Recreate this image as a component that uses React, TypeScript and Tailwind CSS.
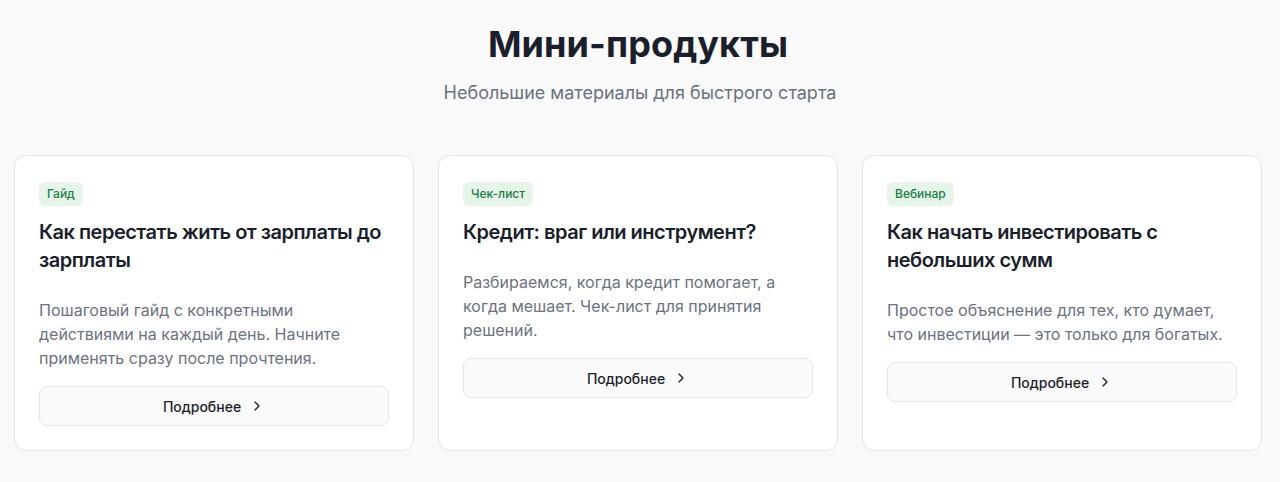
import React from "react";
import { ChevronRight } from "lucide-react";

const items = [
  {
    tag: "Гайд",
    title: "Как перестать жить от зарплаты до зарплаты",
    desc: "Пошаговый гайд с конкретными действиями на каждый день. Начните применять сразу после прочтения.",
  },
  {
    tag: "Чек-лист",
    title: "Кредит: враг или инструмент?",
    desc: "Разбираемся, когда кредит помогает, а когда мешает. Чек-лист для принятия решений.",
  },
  {
    tag: "Вебинар",
    title: "Как начать инвестировать с небольших сумм",
    desc: "Простое объяснение для тех, кто думает, что инвестиции — это только для богатых.",
  },
];

export default function App() {
  return (
    <div
      className="min-h-[482px] bg-[#f9f9f9] px-[14px] pt-6"
      style={{ fontFamily: "Inter, 'Noto Sans', sans-serif" }}
    >
      <div className="text-center">
        <h1 className="text-[36px] leading-[40px] font-bold text-[#1a1f2b] tracking-[0.1px] pr-[4px]">
          Мини-продукты
        </h1>
        <p className="mt-[15px] text-[18px] leading-[28px] text-[#6b7280]">
          Небольшие материалы для быстрого старта
        </p>
      </div>
      <div className="mt-[48px] grid grid-cols-[400px_400px_400px] gap-6">
        {items.map((it) => (
          <div
            key={it.tag}
            className="bg-white border border-[#e4e4e7] rounded-xl p-6 flex flex-col"
          >
            <div>
              <span className="inline-block rounded-md bg-[#e6f4ea] px-2 py-1 text-[12px] leading-[16px] font-medium text-[#15803d]">
                {it.tag}
              </span>
            </div>
            <h3 className="mt-[12px] text-[20px] leading-[28px] font-semibold text-[#1a1f2b] tracking-[-0.5px]">
              {it.title}
            </h3>
            <p className="mt-6 text-[16px] leading-[24px] text-[#6b7280]">
              {it.desc}
            </p>
            <button className="mt-4 h-10 w-full rounded-lg border border-[#e4e4e7] bg-[#fafafa] flex items-center justify-center gap-2 text-[14px] font-medium text-[#1a1f2b]">
              Подробнее
              <ChevronRight size={16} strokeWidth={2} />
            </button>
          </div>
        ))}
      </div>
    </div>
  );
}
